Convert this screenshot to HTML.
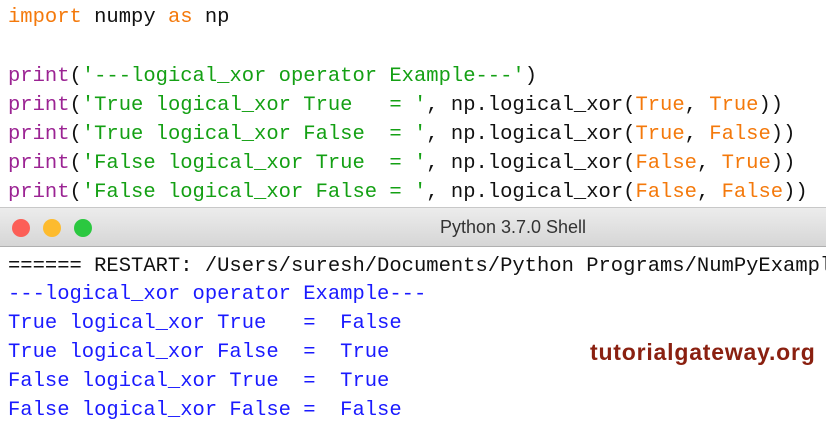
<!DOCTYPE html>
<html><head><style>
body{margin:0;width:826px;height:425px;overflow:hidden;background:#fff;position:relative;font-family:"Liberation Mono",monospace;}
.l{position:absolute;left:8px;font-size:20.5px;white-space:pre;line-height:29px;}
.o{color:#f4790b}.p{color:#9b2393}.g{color:#14a014}.k{color:#111}.b{color:#1a1aff}
#bar{position:absolute;left:0;top:207px;width:826px;height:38px;background:linear-gradient(#ececec,#d6d6d6);border-top:1px solid #c8c8c8;border-bottom:1px solid #b0b0b0;}
.d{position:absolute;top:11px;width:18px;height:18px;border-radius:50%;}
#t{position:absolute;left:0;width:826px;text-align:center;top:9px;font-family:"Liberation Sans",sans-serif;font-size:18px;color:#333;padding-left:200px;box-sizing:border-box}
#logo{position:absolute;left:590px;top:339px;font-family:"Liberation Sans",sans-serif;font-weight:bold;font-size:23px;color:#8a2010;letter-spacing:0.8px}
</style></head><body>
<div class="l" style="top:3px"><span class="o">import</span><span class="k"> numpy </span><span class="o">as</span><span class="k"> np</span></div>
<div class="l" style="top:62px"><span class="p">print</span><span class="k">(</span><span class="g">'---logical_xor operator Example---'</span><span class="k">)</span></div>
<div class="l" style="top:91px"><span class="p">print</span><span class="k">(</span><span class="g">'True logical_xor True   = '</span><span class="k">, np.logical_xor(</span><span class="o">True</span><span class="k">, </span><span class="o">True</span><span class="k">))</span></div>
<div class="l" style="top:120px"><span class="p">print</span><span class="k">(</span><span class="g">'True logical_xor False  = '</span><span class="k">, np.logical_xor(</span><span class="o">True</span><span class="k">, </span><span class="o">False</span><span class="k">))</span></div>
<div class="l" style="top:149px"><span class="p">print</span><span class="k">(</span><span class="g">'False logical_xor True  = '</span><span class="k">, np.logical_xor(</span><span class="o">False</span><span class="k">, </span><span class="o">True</span><span class="k">))</span></div>
<div class="l" style="top:178px"><span class="p">print</span><span class="k">(</span><span class="g">'False logical_xor False = '</span><span class="k">, np.logical_xor(</span><span class="o">False</span><span class="k">, </span><span class="o">False</span><span class="k">))</span></div>
<div id="bar">
<div class="d" style="left:12px;background:#fc5f57"></div>
<div class="d" style="left:43px;background:#fdbb2e"></div>
<div class="d" style="left:74px;background:#2bc840"></div>
<div id="t">Python 3.7.0 Shell</div>
</div>
<div class="l k" style="top:252px">====== RESTART: /Users/suresh/Documents/Python Programs/NumPyExampl</div>
<div class="l b" style="top:280px">---logical_xor operator Example---</div>
<div class="l b" style="top:309px">True logical_xor True   =  False</div>
<div class="l b" style="top:338px">True logical_xor False  =  True</div>
<div class="l b" style="top:367px">False logical_xor True  =  True</div>
<div class="l b" style="top:396px">False logical_xor False =  False</div>
<div id="logo">tutorialgateway.org</div>
</body></html>
